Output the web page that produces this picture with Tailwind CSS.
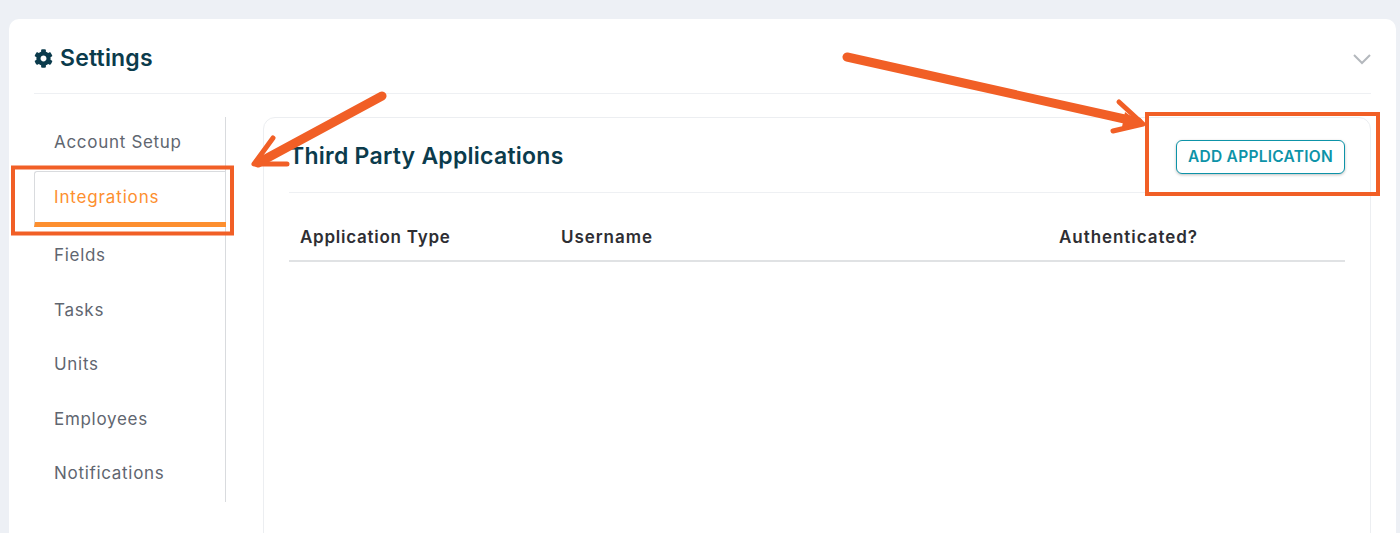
<!DOCTYPE html>
<html>
<head>
<meta charset="utf-8">
<script src="https://cdn.jsdelivr.net/npm/@tailwindcss/browser@4"></script>
</head>
<body class="m-0 p-0">
<div class="relative w-[1400px] h-[533px] overflow-hidden bg-[#edf0f5] font-['Inter','Open_Sans',sans-serif]">
  <div class="absolute left-[9px] top-[19px] w-[1387px] h-[560px] bg-white rounded-[10px] px-[25px]">
    <div class="h-[75px] border-b border-[#eef0f3] flex items-center justify-between pt-[5px]">
      <div class="flex items-center gap-[7px] text-[#0b3b4c]">
        <svg class="w-[19px] h-[19px]" viewBox="0 0 512 512" fill="#0b3b4c"><path d="M487.4 315.7l-42.6-24.6c4.3-23.2 4.3-47 0-70.2l42.6-24.6c4.9-2.8 7.1-8.6 5.5-14-11.1-35.6-30-67.8-54.7-94.6-3.8-4.1-10-5.1-14.8-2.3L380.8 110c-17.9-15.4-38.5-27.3-60.8-35.1V25.8c0-5.6-3.9-10.5-9.4-11.7-36.7-8.2-74.3-7.8-109.2 0-5.5 1.2-9.4 6.1-9.4 11.7V75c-22.2 7.9-42.8 19.8-60.8 35.1L88.7 85.5c-4.9-2.8-11-1.9-14.8 2.3-24.7 26.7-43.6 58.9-54.7 94.6-1.7 5.4.6 11.2 5.5 14L67.3 221c-4.3 23.2-4.3 47 0 70.2l-42.6 24.6c-4.9 2.8-7.1 8.6-5.5 14 11.1 35.6 30 67.8 54.7 94.6 3.8 4.1 10 5.1 14.8 2.3l42.6-24.6c17.9 15.4 38.5 27.3 60.8 35.1v49.2c0 5.6 3.9 10.5 9.4 11.7 36.7 8.2 74.3 7.8 109.2 0 5.5-1.2 9.4-6.1 9.4-11.7v-49.2c22.2-7.9 42.8-19.8 60.8-35.1l42.6 24.6c4.9 2.8 11 1.9 14.8-2.3 24.7-26.7 43.6-58.9 54.7-94.6 1.5-5.5-.7-11.3-5.6-14.1zM256 336c-44.1 0-80-35.9-80-80s35.9-80 80-80 80 35.9 80 80-35.9 80-80 80z"/></svg>
        <span class="text-[23px] font-semibold leading-none tracking-[0.2px]">Settings</span>
      </div>
      <svg class="w-[18px] h-[12px]" viewBox="0 0 18 12" fill="none" stroke="#b4b8bd" stroke-width="2"><path d="M1 2l8 8 8-8"/></svg>
    </div>
    <div class="flex mt-[23px]">
      <nav class="w-[192px] h-[385px] border-r border-[#d9dbde] shrink-0 text-[17px] text-[#5f6670] tracking-[0.7px]">
        <div class="h-[54px] pl-[20px] flex items-center pb-[2px]">Account Setup</div>
        <div class="h-[56px] pl-[19px] flex items-center pt-[2px] border-l border-t border-[#d9dbde] border-b-[5px] border-b-[#fd8f2f] rounded-tl-[3px] text-[#fd8f2f] w-[192px] tracking-[0.85px]">Integrations</div>
        <div class="h-[56px] pl-[20px] flex items-center pt-[2px]">Fields</div>
        <div class="h-[54px] pl-[20px] flex items-center pt-[2px]">Tasks</div>
        <div class="h-[55px] pl-[20px] flex items-center">Units</div>
        <div class="h-[54px] pl-[20px] flex items-center pt-[2px]">Employees</div>
        <div class="h-[55px] pl-[20px] flex items-center">Notifications</div>
      </nav>
      <section class="ml-[37px] w-[1108px] h-[500px] border border-[#eceef1] rounded-[12px] pl-[25px] pr-[25px]">
        <div class="h-[75px] border-b border-[#eef0f3] flex items-center justify-between">
          <h2 class="text-[23px] font-semibold text-[#0b3b4c] tracking-[0.25px] mt-[2px]">Third Party Applications</h2>
          <button class="w-[169px] h-[34px] mt-[3px] border border-[#0d93a8] rounded-[6px] text-[#0d93a8] text-[15.5px] font-semibold tracking-[0.27px] shadow-[0_1px_3px_rgba(0,0,0,0.25)] bg-white">ADD APPLICATION</button>
        </div>
        <div class="flex items-center h-[69px] pt-[22px] border-b-2 border-[#e0e2e4] text-[17px] font-semibold text-[#2e2e33] tracking-[0.75px]">
          <div class="w-[272px] pl-[11px]">Application Type</div>
          <div class="w-[498px] tracking-[0.95px]">Username</div>
          <div class="tracking-[0.95px]">Authenticated?</div>
        </div>
      </section>
    </div>
  </div>
  <svg class="absolute inset-0 w-[1400px] h-[533px] pointer-events-none" viewBox="0 0 1400 533" fill="none" stroke="#f15f26" stroke-linecap="round" stroke-linejoin="round">
    <rect x="13" y="167.500" width="219" height="66" stroke-width="4" stroke-linecap="butt" stroke-linejoin="miter"/>
    <rect x="1147" y="114" width="231" height="80" stroke-width="4" stroke-linecap="butt" stroke-linejoin="miter"/>
    <path d="M382 96L258 163" stroke-width="9"/>
    <path d="M273 138L254 164L287 164" stroke-width="5"/>
    <path d="M847 57L1138 122" stroke-width="9"/>
    <path d="M1119 102L1143 124L1113 131" stroke-width="5"/>
    <path d="M1142 124L1125 112L1122 127Z" fill="#f15f26" stroke="none"/>
  </svg>
</div>
</body>
</html>
